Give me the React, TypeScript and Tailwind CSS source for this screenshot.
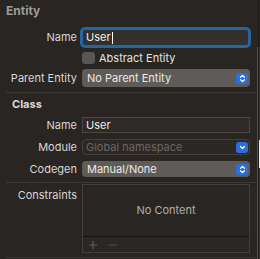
import React from "react";

function Stepper() {
  return (
    <div className="w-[12px] h-[11px] rounded-[3px] bg-[#2a6ee0] flex items-center justify-center">
      <svg width="7" height="9" viewBox="0 0 7 9" fill="none" stroke="white" strokeWidth="1.2" strokeLinecap="round" strokeLinejoin="round">
        <path d="M1.5 3.3 L3.5 1.5 L5.5 3.3" />
        <path d="M1.5 5.7 L3.5 7.5 L5.5 5.7" />
      </svg>
    </div>
  );
}

function Chevron() {
  return (
    <div className="w-[12px] h-[11px] rounded-[3px] bg-[#2a6ee0] flex items-center justify-center">
      <svg width="7" height="5" viewBox="0 0 7 5" fill="none" stroke="white" strokeWidth="1.2" strokeLinecap="round" strokeLinejoin="round">
        <path d="M1.5 1.5 L3.5 3.5 L5.5 1.5" />
      </svg>
    </div>
  );
}

function Label({ children }: { children: React.ReactNode }) {
  return <div className="w-[77px] shrink-0 text-right text-[11px] text-[#dad6d2]">{children}</div>;
}

export default function App() {
  return (
    <div className="w-[260px] h-[259px] bg-[#282522] flex overflow-hidden font-['Inter',sans-serif]">
      <div className="w-[256px] shrink-0 flex flex-col">
        {/* Entity */}
        <div className="h-[22px] leading-[22px] pl-[6px] text-[12px] font-bold text-[#9f9b97]">Entity</div>

        <div className="flex items-center h-[21px] mt-[5px]">
          <Label>Name</Label>
          <div className="ml-[3px] w-[171px] h-[21px] border-[3px] border-[#2566a0] rounded-[5px] bg-[#34302d] flex items-center pl-[3px] text-[11px] text-[#f0eeeb]">
            User<span className="w-px h-[12px] bg-white ml-px" />
          </div>
        </div>

        <div className="flex items-center h-[12px] mt-[4px]">
          <div className="w-[77px] shrink-0" />
          <div className="ml-[5px] w-[13px] h-[12px] rounded-[3px] bg-[#5a5653]" />
          <span className="ml-[4px] text-[11px] text-[#e6e3e0]">Abstract Entity</span>
        </div>

        <div className="flex items-center h-[18px] mt-[5px]">
          <Label>Parent Entity</Label>
          <div className="ml-[5px] w-[168px] h-[18px] rounded-[4px] bg-[#5f5b58] flex items-center justify-between pl-[5px] pr-[2px] text-[11px] text-[#eceae7]">
            <span>No Parent Entity</span>
            <Stepper />
          </div>
        </div>

        <div className="mt-[5px] ml-[6px] h-px bg-[#3e3a37]" />

        {/* Class */}
        <div className="h-[14px] leading-[14px] mt-[4px] pl-[12px] text-[11px] font-bold text-[#dcd8d4]">Class</div>

        <div className="flex items-center h-[16px] mt-[6px]">
          <Label>Name</Label>
          <div className="ml-[5px] w-[168px] h-[16px] border border-[#4a4643] bg-[#2e2a27] flex items-center pl-[3px] text-[11px] text-[#eceae7]">
            User
          </div>
        </div>

        <div className="flex items-center h-[16px] mt-[6px]">
          <Label>Module</Label>
          <div className="ml-[5px] w-[168px] h-[16px] border border-[#44403d] rounded-[4px] bg-[#2b2825] flex items-center justify-between pl-[3px] pr-[1px] text-[11px] text-[#6b6763]">
            <span>Global namespace</span>
            <Chevron />
          </div>
        </div>

        <div className="flex items-center h-[16px] mt-[6px]">
          <Label>Codegen</Label>
          <div className="ml-[5px] w-[168px] h-[16px] rounded-[4px] bg-[#5f5b58] flex items-center justify-between pl-[5px] pr-[2px] text-[11px] text-[#eceae7]">
            <span>Manual/None</span>
            <Stepper />
          </div>
        </div>

        <div className="mt-[5px] ml-[6px] h-px bg-[#3e3a37]" />

        <div className="flex mt-px h-[69px]">
          <div className="w-[77px] shrink-0 text-right text-[11px] text-[#dad6d2] pt-[3px]">Constraints</div>
          <div className="ml-[5px] w-[168px] border border-[#423e3b] flex flex-col">
            <div className="flex-1 flex items-center justify-center text-[11px] text-[#b3afab]">No Content</div>
            <div className="h-[16px] border-t border-[#141210] bg-[#2a2724] flex items-center pl-[5px] gap-[10px]">
              <svg width="10" height="10" viewBox="0 0 10 10" stroke="#625e5b" strokeWidth="1.2">
                <path d="M5 1 V9 M1 5 H9" />
              </svg>
              <svg width="10" height="10" viewBox="0 0 10 10" stroke="#4f4b48" strokeWidth="1.2">
                <path d="M1 5 H9" />
              </svg>
            </div>
          </div>
        </div>

        <div className="mt-[4px] ml-[6px] h-px bg-[#3e3a37]" />
      </div>

      {/* right edge */}
      <div className="w-[4px] shrink-0 flex">
        <div className="w-px bg-[#282522]" />
        <div className="w-px flex flex-col">
          <div className="h-[47px] shrink-0" />
          <div className="flex-1 bg-[#55514e]" />
        </div>
        <div className="w-px bg-[#1e1b19]" />
        <div className="w-px flex flex-col">
          <div className="h-[47px] shrink-0 bg-[#282522]" />
          <div className="h-[93px] shrink-0 bg-[#3a3734]" />
          <div className="h-[28px] shrink-0 bg-[#e8e8e8]" />
          <div className="flex-1 bg-[#3a3734]" />
        </div>
      </div>
    </div>
  );
}
